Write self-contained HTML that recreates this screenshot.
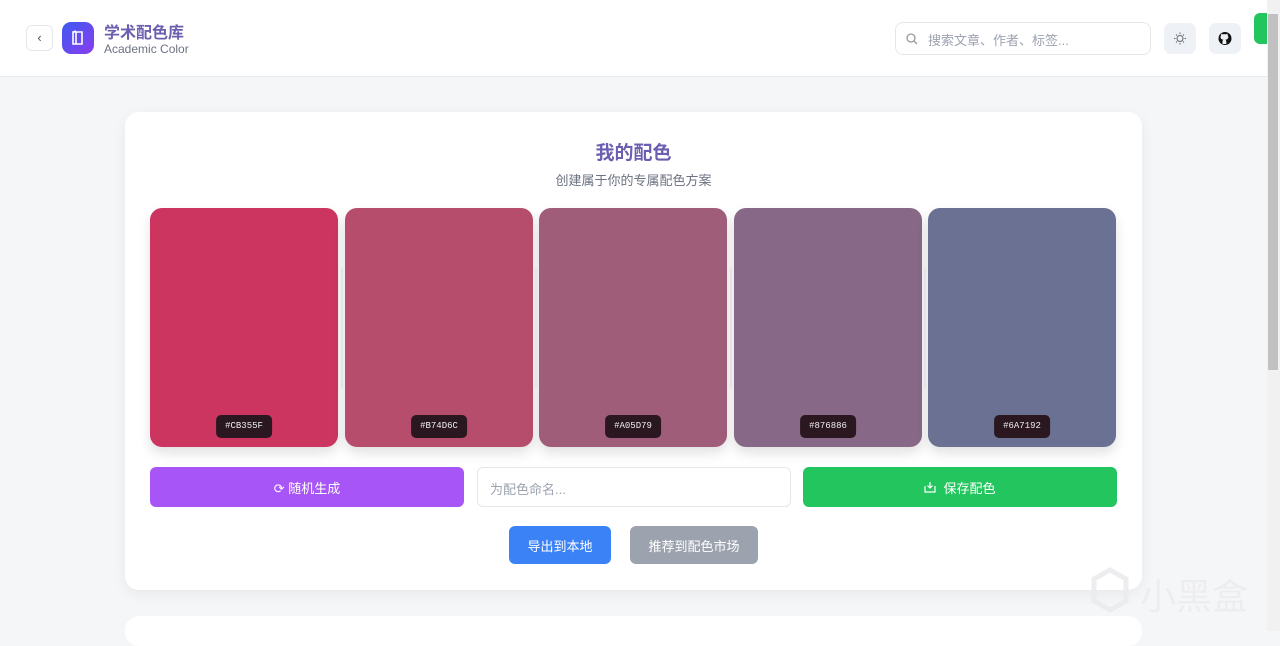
<!DOCTYPE html>
<html><head><meta charset="utf-8"><style>
*{box-sizing:border-box;margin:0;padding:0}
body{width:1280px;height:631px;overflow:hidden;background:#f5f6f8;font-family:"Liberation Sans","Noto Sans CJK SC",sans-serif;position:relative}
.hdr{position:absolute;left:0;top:0;width:1267px;height:77px;background:#fff;border-bottom:1px solid #e8eaee}
.abs{position:absolute}
.card{position:absolute;left:125px;top:112px;width:1017px;height:478px;background:#fff;border-radius:14px;box-shadow:0 4px 14px rgba(0,0,0,.06)}
.sw{position:absolute;top:208px;width:188px;height:239px;border-radius:12px;box-shadow:0 6px 12px rgba(0,0,0,.12)}
.lab{position:absolute;left:50%;bottom:9px;transform:translateX(-50%);background:#2a1720;color:#eee;font:9px "Liberation Mono",monospace;padding:6px 9px;border-radius:5px;height:23px;line-height:11px}
.div{position:absolute;top:268px;width:2px;height:120px;background:#e3e3e8}
.btn{position:absolute;color:#fff;font-size:13px;border-radius:6px;display:flex;align-items:center;justify-content:center;gap:7px}
</style></head><body>
<div class="hdr">
<div class="abs" style="left:26px;top:25px;width:27px;height:26px;border:1px solid #e5e7eb;border-radius:6px;color:#555;font-size:13px;text-align:center;line-height:24px">‹</div>
<div class="abs" style="left:62px;top:22px;width:32px;height:32px;border-radius:9px;background:linear-gradient(135deg,#3b5bf0,#8b3cf0)"><svg width="32" height="32" viewBox="0 0 32 32"><path d="M11 10h9v12h-9zM14 10v12M11 10l3 -1" stroke="#fff" stroke-width="1.6" fill="none"/></svg></div>
<div class="abs" style="left:104px;top:19px;font-size:16px;color:#6d5fb0;font-weight:bold">学术配色库</div>
<div class="abs" style="left:104px;top:42px;font-size:12px;color:#6b7280">Academic Color</div>
<div class="abs" style="left:895px;top:22px;width:256px;height:33px;border:1px solid #e5e7eb;border-radius:8px;font-size:13px;color:#9ca3af;padding:7px 0 0 32px">搜索文章、作者、标签...<svg class="abs" style="left:9px;top:9px" width="14" height="14"><circle cx="6" cy="6" r="4" stroke="#999" fill="none" stroke-width="1.3"/><path d="M9 9l3 3" stroke="#999" stroke-width="1.3"/></svg></div>
<div class="abs" style="left:1164px;top:23px;width:32px;height:31px;border-radius:7px;background:#eef1f6"><svg width="32" height="31"><circle cx="16" cy="15.5" r="3" stroke="#666" fill="none"/><path d="M16 9.5v1.5M16 20v1.5M10 15.5h1.5M20.5 15.5h1.5M12 11.5l1 1M19 18.5l1 1M12 19.5l1-1M19 12.5l1-1" stroke="#666"/></svg></div>
<div class="abs" style="left:1209px;top:23px;width:32px;height:31px;border-radius:7px;background:#eef1f6"><svg width="32" height="31"><circle cx="16" cy="15.5" r="6.5" fill="#111"/><path d="M13.5 21v-2.5c0-1 .5-1.5 1-1.7-2-.3-3-1-3-3 0-.7.3-1.2.7-1.6-.1-.4-.1-1 .1-1.5.7 0 1.3.4 1.6.7a5 5 0 0 1 3 0c.4-.3 1-.7 1.6-.7.2.5.2 1.1.1 1.5.4.4.7.9.7 1.6 0 2-1 2.7-3 3 .5.3 1 .8 1 1.7V21" fill="#eef1f6"/></svg></div>
<div class="abs" style="left:1254px;top:13px;width:13px;height:31px;border-radius:6px 0 0 6px;background:#22c55e"></div>
</div>
<div class="abs" style="left:1267px;top:0;width:13px;height:631px;background:#f1f1f1"></div>
<div class="abs" style="left:1268px;top:14px;width:10px;height:356px;background:#c1c1c1"></div>
<div class="card"></div>
<div class="abs" style="left:125px;top:616px;width:1017px;height:30px;background:#fff;border-radius:14px"></div>
<div class="abs" style="left:0;width:1267px;top:138px;text-align:center;font-size:19px;font-weight:bold;color:#6d5fb0">我的配色</div>
<div class="abs" style="left:0;width:1267px;top:170px;text-align:center;font-size:13px;color:#6b7280">创建属于你的专属配色方案</div>
<div class="sw" style="left:150px;background:#CB355F"><div class="lab">#CB355F</div></div>
<div class="sw" style="left:345px;background:#B74D6C"><div class="lab">#B74D6C</div></div>
<div class="sw" style="left:539px;background:#A05D79"><div class="lab">#A05D79</div></div>
<div class="sw" style="left:734px;background:#876886"><div class="lab">#876886</div></div>
<div class="sw" style="left:928px;background:#6A7192"><div class="lab">#6A7192</div></div>
<div class="div" style="left:341px"></div><div class="div" style="left:535px"></div><div class="div" style="left:730px"></div><div class="div" style="left:924px"></div>
<div class="btn" style="left:150px;top:467px;width:314px;height:40px;background:#a855f7">⟳ 随机生成</div>
<div class="abs" style="left:477px;top:467px;width:314px;height:40px;border:1px solid #e5e7eb;border-radius:6px;font-size:13px;color:#9ca3af;padding:11px 12px">为配色命名...</div>
<div class="btn" style="left:803px;top:467px;width:314px;height:40px;background:#22c55e"><svg width="12" height="12"><path d="M1 5v6h10V5M6 1v6M3.5 4.5L6 7l2.5-2.5" stroke="#fff" fill="none" stroke-width="1.2"/></svg>保存配色</div>
<div class="btn" style="left:509px;top:526px;width:102px;height:38px;background:#3b82f6">导出到本地</div>
<div class="btn" style="left:630px;top:526px;width:128px;height:38px;background:#9ca3af">推荐到配色市场</div>
<svg class="abs" style="left:1088px;top:565px" width="44" height="50"><path d="M6 14l16-9 16 9v22l-16 9-16-9z" stroke="rgba(235,235,238,.9)" stroke-width="5" fill="none"/></svg>
<div class="abs" style="left:1140px;top:568px;font-size:36px;color:rgba(236,236,240,.9)">小黑盒</div>
</body></html>
